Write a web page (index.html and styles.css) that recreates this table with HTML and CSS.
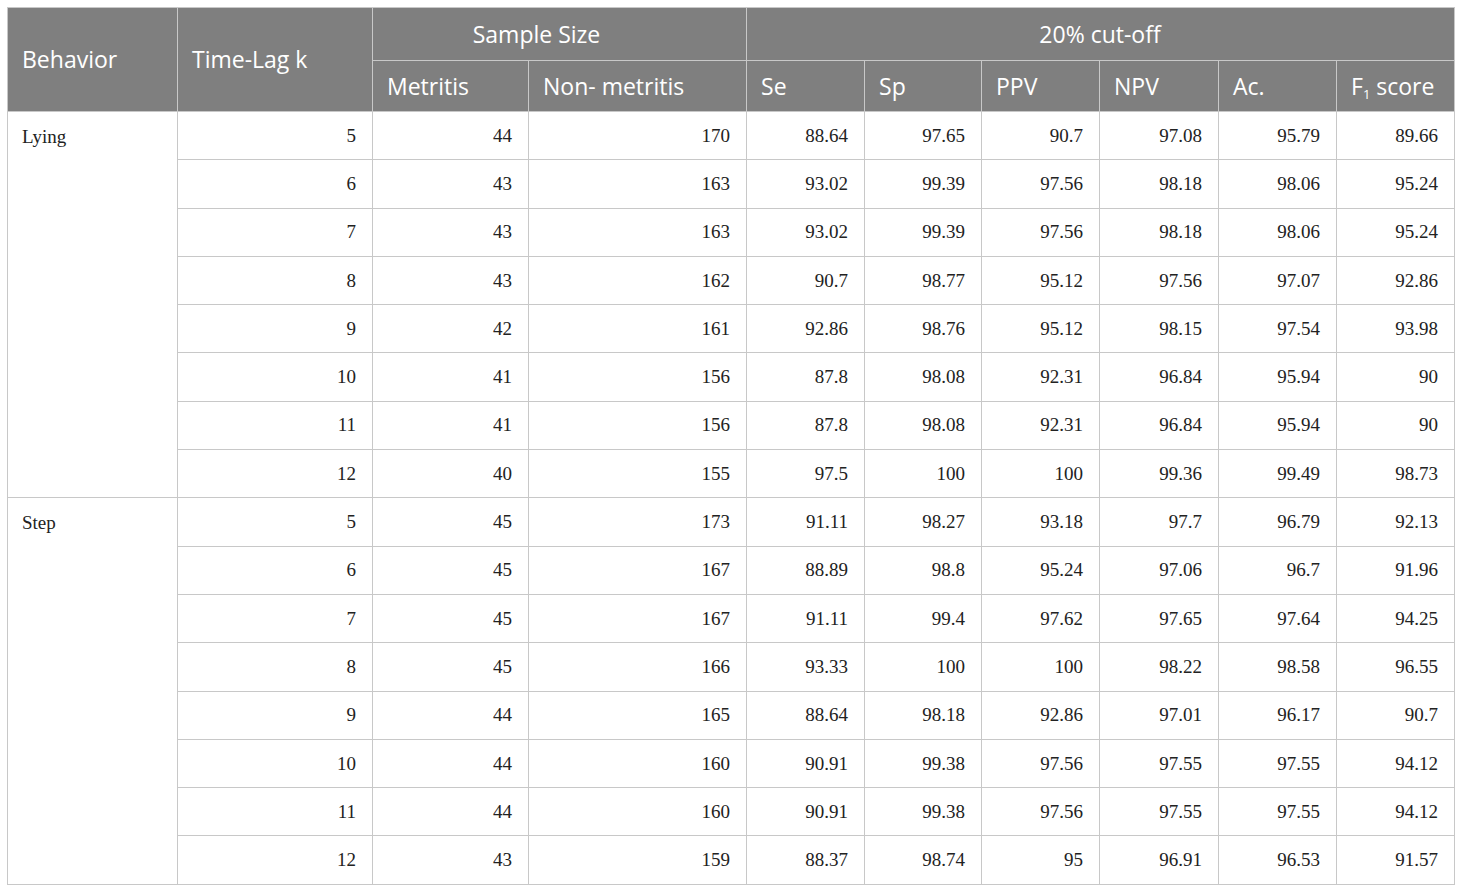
FILE: index.html
```html
<!DOCTYPE html>
<html>
<head>
<meta charset="utf-8">
<link rel="stylesheet" href="styles.css">
</head>
<body>
<table class="data">
<colgroup>
<col class="c1"><col class="c2"><col class="c3"><col class="c4"><col class="c5"><col class="c6"><col class="c7"><col class="c8"><col class="c9"><col class="c10">
</colgroup>
<thead>
<tr class="h1">
<th rowspan="2">Behavior</th>
<th rowspan="2">Time-Lag k</th>
<th colspan="2" class="center shifted">Sample Size</th>
<th colspan="6" class="center">20% cut-off</th>
</tr>
<tr class="h2">
<th>Metritis</th>
<th>Non- metritis</th>
<th>Se</th>
<th>Sp</th>
<th>PPV</th>
<th>NPV</th>
<th>Ac.</th>
<th>F<sub>1</sub> score</th>
</tr>
</thead>
<tbody>
<tr><td rowspan="8" class="beh">Lying</td><td>5</td><td>44</td><td>170</td><td>88.64</td><td>97.65</td><td>90.7</td><td>97.08</td><td>95.79</td><td>89.66</td></tr>
<tr><td>6</td><td>43</td><td>163</td><td>93.02</td><td>99.39</td><td>97.56</td><td>98.18</td><td>98.06</td><td>95.24</td></tr>
<tr><td>7</td><td>43</td><td>163</td><td>93.02</td><td>99.39</td><td>97.56</td><td>98.18</td><td>98.06</td><td>95.24</td></tr>
<tr><td>8</td><td>43</td><td>162</td><td>90.7</td><td>98.77</td><td>95.12</td><td>97.56</td><td>97.07</td><td>92.86</td></tr>
<tr><td>9</td><td>42</td><td>161</td><td>92.86</td><td>98.76</td><td>95.12</td><td>98.15</td><td>97.54</td><td>93.98</td></tr>
<tr><td>10</td><td>41</td><td>156</td><td>87.8</td><td>98.08</td><td>92.31</td><td>96.84</td><td>95.94</td><td>90</td></tr>
<tr><td>11</td><td>41</td><td>156</td><td>87.8</td><td>98.08</td><td>92.31</td><td>96.84</td><td>95.94</td><td>90</td></tr>
<tr><td>12</td><td>40</td><td>155</td><td>97.5</td><td>100</td><td>100</td><td>99.36</td><td>99.49</td><td>98.73</td></tr>
<tr><td rowspan="8" class="beh">Step</td><td>5</td><td>45</td><td>173</td><td>91.11</td><td>98.27</td><td>93.18</td><td>97.7</td><td>96.79</td><td>92.13</td></tr>
<tr><td>6</td><td>45</td><td>167</td><td>88.89</td><td>98.8</td><td>95.24</td><td>97.06</td><td>96.7</td><td>91.96</td></tr>
<tr><td>7</td><td>45</td><td>167</td><td>91.11</td><td>99.4</td><td>97.62</td><td>97.65</td><td>97.64</td><td>94.25</td></tr>
<tr><td>8</td><td>45</td><td>166</td><td>93.33</td><td>100</td><td>100</td><td>98.22</td><td>98.58</td><td>96.55</td></tr>
<tr><td>9</td><td>44</td><td>165</td><td>88.64</td><td>98.18</td><td>92.86</td><td>97.01</td><td>96.17</td><td>90.7</td></tr>
<tr><td>10</td><td>44</td><td>160</td><td>90.91</td><td>99.38</td><td>97.56</td><td>97.55</td><td>97.55</td><td>94.12</td></tr>
<tr><td>11</td><td>44</td><td>160</td><td>90.91</td><td>99.38</td><td>97.56</td><td>97.55</td><td>97.55</td><td>94.12</td></tr>
<tr><td>12</td><td>43</td><td>159</td><td>88.37</td><td>98.74</td><td>95</td><td>96.91</td><td>96.53</td><td>91.57</td></tr>
</tbody>
</table>
</body>
</html>
```
FILE: styles.css
```css
html, body {
  margin: 0;
  padding: 0;
  background: #ffffff;
}
body {
  padding: 7px 0 0 7px;
}
.data {
  border-collapse: collapse;
  table-layout: fixed;
  width: 1447px;
  color: #222222;
}
.c1 { width: 170px; }
.c2 { width: 195px; }
.c3 { width: 156px; }
.c4 { width: 218px; }
.c5 { width: 118px; }
.c6 { width: 117px; }
.c7 { width: 118px; }
.c8 { width: 119px; }
.c9 { width: 118px; }
.c10 { width: 118px; }
.data th, .data td {
  border: 1px solid #c8c8c8;
  padding: 0 15px;
}
.data th {
  background: #7f7f7f;
  color: #ffffff;
  font-family: "Open Sans", "Noto Sans", sans-serif;
  font-size: 23px;
  font-weight: 400;
  text-align: left;
  vertical-align: middle;
  line-height: 27px;
  padding-left: 14px;
}
.data th.center {
  text-align: center;
}
.data th.shifted {
  padding-right: 60px;
}
.data th sub {
  font-size: 13px;
  line-height: 0;
  vertical-align: -4px;
}
.h1 { height: 53px; }
.h2 { height: 51px; }
.data td {
  font-family: "Liberation Serif", "Times New Roman", serif;
  font-size: 19px;
  line-height: 22px;
  text-align: right;
  height: 47.3px;
  vertical-align: middle;
  padding-right: 16px;
}
.data td.beh {
  text-align: left;
  vertical-align: top;
  padding-top: 14px;
  padding-left: 14px;
}
```
